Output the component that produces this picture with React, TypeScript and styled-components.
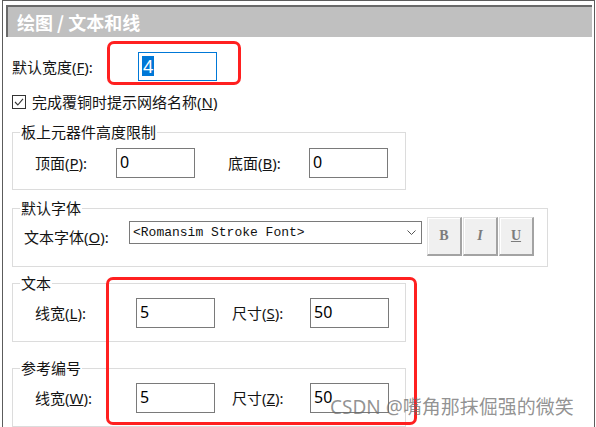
import React from 'react';
import styled, { createGlobalStyle } from 'styled-components';

const GlobalStyle = createGlobalStyle`
  html, body {
    margin: 0;
    padding: 0;
    background: #fff;
  }
  body {
    font-family: "Noto Sans", "Noto Sans CJK SC", sans-serif;
    color: #111;
    overflow: hidden;
  }
`;

const Frame = styled.div`
  position: relative;
  width: 591px;
  height: 440px;
  margin-left: 2px;
  border: 1px solid #5c5c5c;
  border-bottom: none;
  background: #fff;
`;

const TitleBar = styled.div`
  display: flex;
  align-items: center;
  height: 30px;
  margin: 4px 2px 0 3px;
  padding-left: 9px;
  background: #c0c0c0;
  border-top: 2px solid #6a6a6a;
  border-left: 2px solid #6a6a6a;
  color: #fff;
  font-family: "Noto Sans CJK SC", sans-serif;
  font-size: 18px;
  font-weight: 700;
  line-height: 22px;
`;

const Body = styled.div`
  display: flex;
  flex-direction: column;
  align-items: flex-start;
  padding-left: 9px;
`;

const Row = styled.div<{ $mt?: number; $pl?: number; $h: number }>`
  display: flex;
  align-items: center;
  height: ${(p) => p.$h}px;
  margin-top: ${(p) => p.$mt ?? 0}px;
  padding-left: ${(p) => p.$pl ?? 0}px;
`;

const Label = styled.span<{ $w?: number; $ml?: number }>`
  display: inline-block;
  width: ${(p) => (p.$w ? `${p.$w}px` : 'auto')};
  margin-left: ${(p) => p.$ml ?? 0}px;
  height: 20px;
  font-size: 15px;
  line-height: 20px;
  white-space: nowrap;
  color: #141414;
`;

const ValueBox = styled.div<{ $h?: number; $focus?: boolean }>`
  box-sizing: border-box;
  display: flex;
  align-items: center;
  width: 79px;
  height: ${(p) => p.$h ?? 30}px;
  padding: 0 0 2px 3px;
  border: 1px solid ${(p) => (p.$focus ? '#0078d7' : '#7a7a7a')};
  background: #fff;
  font-size: 16px;
  line-height: 20px;
  color: #000;
`;

const Selected = styled.span`
  display: inline-block;
  padding: 0 1px;
  height: 20px;
  line-height: 20px;
  background: #0078d7;
  color: #fff;
  font-size: 18px;
`;

const CheckBox = styled.span`
  box-sizing: border-box;
  display: inline-flex;
  align-items: center;
  justify-content: center;
  width: 14px;
  height: 14px;
  margin-right: 6px;
  border: 1px solid #333;
  background: #fff;
`;

const Group = styled.fieldset<{ $w: number; $mt: number; $pt: number; $pb: number }>`
  box-sizing: border-box;
  width: ${(p) => p.$w}px;
  min-width: 0;
  margin: ${(p) => p.$mt}px 0 0 0;
  padding: ${(p) => p.$pt}px 0 ${(p) => p.$pb}px 0;
  border: 1px solid #dcdcdc;
`;

const Legend = styled.legend`
  height: 18px;
  margin-left: 7px;
  padding: 0 1px;
  font-family: "Noto Sans CJK SC", sans-serif;
  font-size: 15px;
  line-height: 18px;
  color: #141414;
`;

const Select = styled.div`
  box-sizing: border-box;
  display: flex;
  align-items: center;
  justify-content: space-between;
  align-self: flex-start;
  width: 293px;
  height: 23px;
  margin-top: 4px;
  padding: 0 5px 0 3px;
  border: 1px solid #7a7a7a;
  font-family: "Liberation Mono", monospace;
  font-size: 13px;
  color: #111;
`;

const StyleButtons = styled.div`
  display: flex;
  gap: 1px;
  margin-left: 5px;
`;

const StyleButton = styled.div<{ $italic?: boolean; $under?: boolean }>`
  box-sizing: border-box;
  display: flex;
  align-items: center;
  justify-content: center;
  width: 35px;
  height: 39px;
  background: #f0f0f0;
  border-top: 1px solid #e2e2e2;
  border-left: 1px solid #e2e2e2;
  border-right: 2px solid #a3a3a3;
  border-bottom: 2px solid #a3a3a3;
  box-shadow: inset 1px 1px 0 #fff;
  font-family: "Liberation Serif", serif;
  font-size: 14px;
  font-weight: 700;
  font-style: ${(p) => (p.$italic ? 'italic' : 'normal')};
  text-decoration: ${(p) => (p.$under ? 'underline' : 'none')};
  color: #7c7c7c;
`;

const Highlight = styled.div<{ $x: number; $y: number; $w: number; $h: number }>`
  position: absolute;
  box-sizing: border-box;
  left: ${(p) => p.$x}px;
  top: ${(p) => p.$y}px;
  width: ${(p) => p.$w}px;
  height: ${(p) => p.$h}px;
  border: 3px solid #ff2020;
  border-radius: 7px;
  pointer-events: none;
`;

const Watermark = styled.div`
  position: absolute;
  left: 327px;
  top: 393px;
  font-family: "Noto Sans", "Noto Sans CJK SC", sans-serif;
  font-size: 19px;
  line-height: 26px;
  color: rgba(105, 105, 105, 0.72);
  white-space: nowrap;
  pointer-events: none;
`;

const Key = ({ k }: { k: string }) => <u>{k}</u>;

export default function App() {
  return (
    <>
      <GlobalStyle />
      <Frame>
        <TitleBar>绘图 / 文本和线</TitleBar>
        <Body>
          <Row $h={29} $mt={15}>
            <Label $w={126}>
              默认宽度(<Key k="F" />):
            </Label>
            <ValueBox $h={29} $focus>
              <Selected>4</Selected>
            </ValueBox>
          </Row>

          <Row $h={20} $mt={11}>
            <CheckBox>
              <svg width="10" height="10" viewBox="0 0 10 10">
                <polyline points="1,5 3.8,8 9,1.8" fill="none" stroke="#333" strokeWidth="1.1" />
              </svg>
            </CheckBox>
            <Label>
              完成覆铜时提示网络名称(<Key k="N" />)
            </Label>
          </Row>

          <Group $w={394} $mt={11} $pt={7} $pb={11}>
            <Legend>板上元器件高度限制</Legend>
            <Row $h={30} $pl={22}>
              <Label $w={81}>
                顶面(<Key k="P" />):
              </Label>
              <ValueBox>0</ValueBox>
              <Label $w={81} $ml={33}>
                底面(<Key k="B" />):
              </Label>
              <ValueBox>0</ValueBox>
            </Row>
          </Group>

          <Group $w={536} $mt={9} $pt={0} $pb={10}>
            <Legend>默认字体</Legend>
            <Row $h={39} $pl={11}>
              <Label $w={105}>
                文本字体(<Key k="O" />):
              </Label>
              <Select>
                <span>&lt;Romansim Stroke Font&gt;</span>
                <svg width="9" height="5" viewBox="0 0 9 5">
                  <polyline points="0.5,0.5 4.5,4.5 8.5,0.5" fill="none" stroke="#555" strokeWidth="1" />
                </svg>
              </Select>
              <StyleButtons>
                <StyleButton>B</StyleButton>
                <StyleButton $italic>I</StyleButton>
                <StyleButton $under>U</StyleButton>
              </StyleButtons>
            </Row>
          </Group>

          <Group $w={394} $mt={7} $pt={6} $pb={13}>
            <Legend>文本</Legend>
            <Row $h={30} $pl={22}>
              <Label $w={101}>
                线宽(<Key k="L" />):
              </Label>
              <ValueBox>5</ValueBox>
              <Label $w={78} $ml={17}>
                尺寸(<Key k="S" />):
              </Label>
              <ValueBox>50</ValueBox>
            </Row>
          </Group>

          <Group $w={394} $mt={17} $pt={6} $pb={13}>
            <Legend>参考编号</Legend>
            <Row $h={30} $pl={22}>
              <Label $w={101}>
                线宽(<Key k="W" />):
              </Label>
              <ValueBox>5</ValueBox>
              <Label $w={78} $ml={17}>
                尺寸(<Key k="Z" />):
              </Label>
              <ValueBox>50</ValueBox>
            </Row>
          </Group>
        </Body>

        <Highlight $x={104} $y={40} $w={134} $h={44} />
        <Highlight $x={103} $y={276} $w={311} $h={148} />
        <Watermark>CSDN @嘴角那抹倔强的微笑</Watermark>
      </Frame>
    </>
  );
}
